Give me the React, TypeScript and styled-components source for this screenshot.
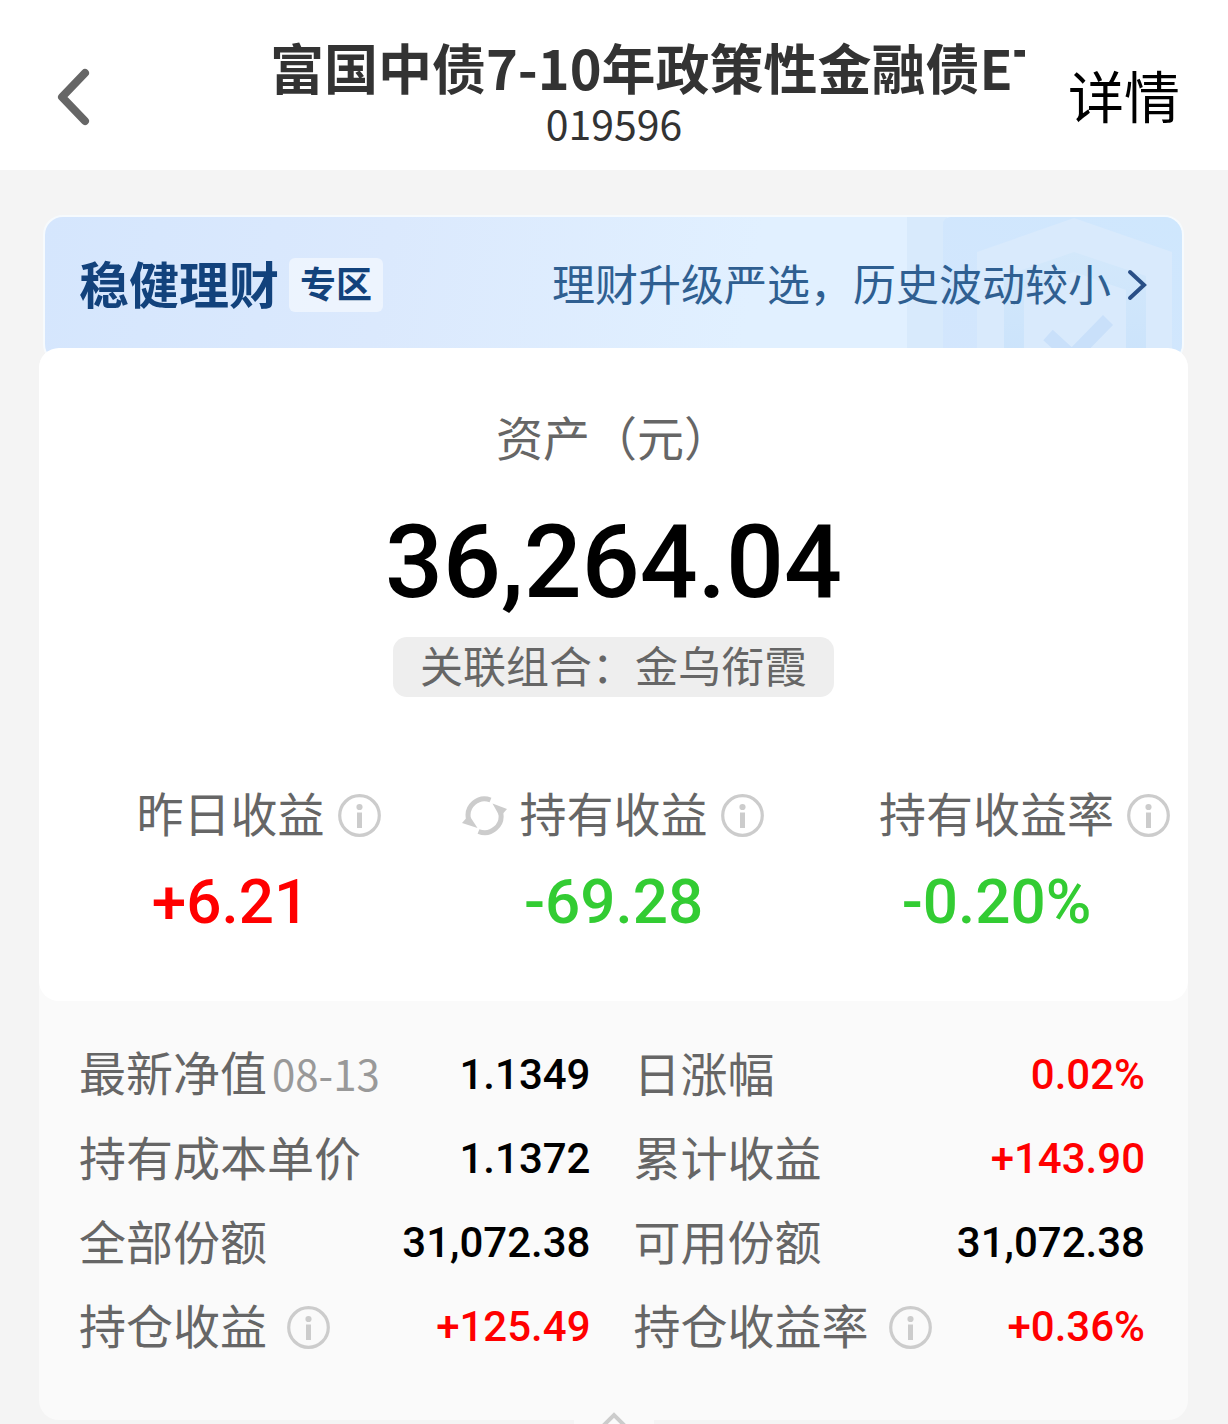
import React from "react";
import styled, { createGlobalStyle } from "styled-components";

const cjk = `"Noto Sans CJK SC", "Noto Sans", sans-serif`;
const numeric = `Roboto, "Noto Sans CJK SC", sans-serif`;

const colors = {
  page: "#f4f4f4",
  soft: "#fafafa",
  label: "#666666",
  faint: "#999999",
  title: "#333333",
  up: "#ff0000",
  down: "#33cc33",
  navy: "#12427c",
};

type Tone = "plain" | "up" | "down";
const toneColor: Record<Tone, string> = { plain: "#000000", up: colors.up, down: colors.down };

const GlobalStyle = createGlobalStyle`
  *, *::before, *::after { box-sizing: border-box; }
  body { margin: 0; background: ${colors.page}; font-family: ${cjk}; }
  h1, p, dl, dt, dd { margin: 0; }
  button { padding: 0; border: 0; background: none; font-family: inherit; cursor: pointer; }
  svg { display: block; }
`;

const Header = styled.header`
  display: grid;
  grid-template-columns: 203px minmax(0, 1fr) 203px;
  height: 170px;
  background: #ffffff;
`;

const BackButton = styled.button`
  display: flex;
  align-items: center;
  padding: 24px 0 0 56px;
`;

const Heading = styled.div`
  padding-top: 35px;
  text-align: center;
`;

const FundName = styled.h1`
  padding-left: 67px;
  overflow: hidden;
  color: ${colors.title};
  font-size: 54px;
  font-weight: 700;
  line-height: 64px;
  text-align: left;
  white-space: nowrap;
`;

const FundCode = styled.p`
  color: ${colors.title};
  font-size: 41px;
  line-height: 46px;
`;

const DetailButton = styled.button`
  justify-self: end;
  padding: 16px 48px 0 0;
  color: #000000;
  font-size: 56px;
`;

const Main = styled.main`
  padding: 45px 40px 0 39px;
`;

const Banner = styled.a`
  position: relative;
  display: flex;
  align-items: center;
  justify-content: space-between;
  height: 149px;
  margin: 0 4px;
  padding: 0 35px 10px 34px;
  overflow: hidden;
  border: 2px solid #f6fafd;
  border-radius: 20px;
  background: linear-gradient(100deg, #d5e6fd 0%, #dbe9fd 30%, #e1f0ff 62%, #e1f0ff 100%);
  text-decoration: none;
`;

const BannerArt = styled.svg`
  position: absolute;
  top: 0;
  right: 0;
`;

const BannerGroup = styled.span`
  position: relative;
  display: flex;
  align-items: center;
  gap: 10px;
`;

const BannerTitle = styled.strong`
  padding-bottom: 6px;
  color: ${colors.navy};
  font-size: 50px;
  font-weight: 700;
  line-height: 50px;
`;

const Zone = styled.span`
  padding: 0 11px 6px;
  border-radius: 6px;
  background: rgba(255, 255, 255, 0.5);
  color: ${colors.navy};
  font-size: 36px;
  font-weight: 700;
  line-height: 48px;
`;

const BannerText = styled.span`
  padding-bottom: 6px;
  color: #2f5f91;
  font-size: 43px;
  line-height: 50px;
`;

const Holdings = styled.section`
  border-radius: 20px;
  background: ${colors.soft};
`;

const Card = styled.div`
  position: relative;
  margin-top: -16px;
  padding: 63px 0;
  border-radius: 20px;
  background: #ffffff;
`;

const Summary = styled.div`
  display: flex;
  flex-direction: column;
  align-items: center;
`;

const Label = styled.span`
  padding-bottom: 6px;
  color: ${colors.label};
  font-size: 47px;
  line-height: 50px;
  white-space: nowrap;
`;

const Amount = styled.p`
  margin: 35px 0 15px;
  color: #000000;
  font-family: ${numeric};
  font-size: 102px;
  font-weight: 500;
  line-height: 120px;
`;

const Portfolio = styled.button`
  padding: 0 27px 6px;
  border-radius: 14px;
  background: #eeeeee;
  color: ${colors.label};
  font-size: 43px;
  line-height: 54px;
`;

const Stats = styled.dl`
  display: grid;
  grid-template-columns: repeat(3, minmax(0, 1fr));
  margin-top: 90px;
`;

const Stat = styled.div`
  display: grid;
  gap: 23px;
`;

const StatLabel = styled.dt`
  display: grid;
  grid-template-columns: 1fr auto 1fr;
  align-items: center;
  gap: 13px;
`;

const Side = styled.span<{ $end?: boolean }>`
  display: flex;
  justify-content: ${(p) => (p.$end ? "flex-end" : "flex-start")};
`;

const StatValue = styled.dd<{ $tone: Tone }>`
  color: ${(p) => toneColor[p.$tone]};
  font-family: ${numeric};
  font-size: 62px;
  font-weight: 500;
  line-height: 72px;
  text-align: center;
`;

const Details = styled.dl`
  display: grid;
  grid-template-columns: repeat(2, minmax(0, 1fr));
  column-gap: 43px;
  padding: 32px 43px 51px 40px;
`;

const Row = styled.div`
  display: flex;
  align-items: center;
  justify-content: space-between;
  height: 84px;
`;

const RowLabel = styled.dt`
  display: flex;
  align-items: center;
  gap: 20px;
`;

const NavDate = styled.small`
  margin-left: 5px;
  color: ${colors.faint};
  font-size: 42px;
`;

const RowValue = styled.dd<{ $tone: Tone }>`
  color: ${(p) => toneColor[p.$tone]};
  font-family: ${numeric};
  font-size: 42px;
  font-weight: 500;
  line-height: 56px;
`;

const InfoButton = styled.button`
  flex: none;
`;

const Handle = styled.button`
  position: relative;
  display: flex;
  justify-content: center;
  width: 80px;
  height: 14px;
  margin: -10px auto 0;
  overflow: hidden;
  background: ${colors.soft};
`;

const Info = ({ about }: { about: string }) => (
  <InfoButton type="button" aria-label={`${about}说明`}>
    <svg width="43" height="43" viewBox="0 0 43 43" fill="none">
      <circle cx="21.5" cy="21.5" r="19.8" stroke="#cccccc" strokeWidth="3.2" />
      <circle cx="21.5" cy="13" r="3.1" fill="#cccccc" />
      <path d="M21.5 18.5V34" stroke="#cccccc" strokeWidth="5" />
    </svg>
  </InfoButton>
);

const Refresh = () => (
  <InfoButton type="button" aria-label="刷新">
    <svg width="45" height="43" viewBox="0 0 45 43" fill="none">
      <path d="M28.5 6A16.500 16.500 0 0 0 6.500 25" stroke="#cccccc" strokeWidth="5" />
      <path d="M16.500 37.500A16.500 16.500 0 0 0 38.500 18" stroke="#cccccc" strokeWidth="5" />
      <path d="M0 29L7 21L15.500 34Z" fill="#cccccc" />
      <path d="M45 15L38 23L30.500 9.500Z" fill="#cccccc" />
    </svg>
  </InfoButton>
);

const stats: { label: string; value: string; tone: Tone; refresh?: boolean }[] = [
  { label: "昨日收益", value: "+6.21", tone: "up" },
  { label: "持有收益", value: "-69.28", tone: "down", refresh: true },
  { label: "持有收益率", value: "-0.20%", tone: "down" },
];

const details: { label: string; value: string; tone: Tone; date?: string; info?: boolean }[] = [
  { label: "最新净值", value: "1.1349", tone: "plain", date: "08-13" },
  { label: "日涨幅", value: "0.02%", tone: "up" },
  { label: "持有成本单价", value: "1.1372", tone: "plain" },
  { label: "累计收益", value: "+143.90", tone: "up" },
  { label: "全部份额", value: "31,072.38", tone: "plain" },
  { label: "可用份额", value: "31,072.38", tone: "plain" },
  { label: "持仓收益", value: "+125.49", tone: "up", info: true },
  { label: "持仓收益率", value: "+0.36%", tone: "up", info: true },
];

export default function App() {
  return (
    <>
      <GlobalStyle />
      <Header>
        <BackButton type="button" aria-label="返回">
          <svg width="34" height="58" viewBox="0 0 34 58" fill="none">
            <path d="M29 5L6 29L29 53" stroke="#666666" strokeWidth="8" strokeLinecap="round" strokeLinejoin="round" />
          </svg>
        </BackButton>
        <Heading>
          <FundName>富国中债7-10年政策性金融债ETF</FundName>
          <FundCode>019596</FundCode>
        </Heading>
        <DetailButton type="button">详情</DetailButton>
      </Header>
      <Main>
        <Banner href="#steady">
          <BannerArt width="275" height="145" viewBox="908 217 275 145" aria-hidden="true">
            <defs>
              <linearGradient id="panel" x1="0" y1="1" x2="1" y2="0">
                <stop offset="0" stopColor="#d3e6fd" />
                <stop offset="1" stopColor="#cfe7fd" />
              </linearGradient>
              <linearGradient id="band" x1="0" y1="0" x2="0" y2="1">
                <stop offset="0" stopColor="#d3e8fb" />
                <stop offset="1" stopColor="#cbe3fb" />
              </linearGradient>
            </defs>
            <rect x="908" y="217" width="40" height="145" fill="#d8eafc" />
            <path d="M944 362V225Q944 217 952 217H1183V362Z" fill="url(#panel)" />
            <path d="M978 362V252L1075 218L1173 252V362Z" fill="#d9eafc" />
            <path d="M1005 362V276L1075 252L1147 276V362H1127V290L1075 272L1025 290V362Z" fill="url(#band)" />
            <path d="M1049 335L1073 357L1109 320" stroke="#c9e0fa" strokeWidth="14" fill="none" />
          </BannerArt>
          <BannerGroup>
            <BannerTitle>稳健理财</BannerTitle>
            <Zone>专区</Zone>
          </BannerGroup>
          <BannerGroup>
            <BannerText>理财升级严选，历史波动较小</BannerText>
            <svg width="26" height="34" viewBox="0 0 26 34" fill="none">
              <path d="M9 4L23 17L9 30" stroke="#2a4f86" strokeWidth="4" strokeLinecap="round" />
            </svg>
          </BannerGroup>
        </Banner>
        <Holdings>
          <Card>
            <Summary>
              <Label>资产（元）</Label>
              <Amount>36,264.04</Amount>
              <Portfolio type="button">关联组合：金乌衔霞</Portfolio>
            </Summary>
            <Stats>
              {stats.map((s) => (
                <Stat key={s.label}>
                  <StatLabel>
                    <Side $end>{s.refresh && <Refresh />}</Side>
                    <Label>{s.label}</Label>
                    <Side>
                      <Info about={s.label} />
                    </Side>
                  </StatLabel>
                  <StatValue $tone={s.tone}>{s.value}</StatValue>
                </Stat>
              ))}
            </Stats>
          </Card>
          <Details>
            {details.map((d) => (
              <Row key={d.label}>
                <RowLabel>
                  <Label>
                    {d.label}
                    {d.date && <NavDate>{d.date}</NavDate>}
                  </Label>
                  {d.info && <Info about={d.label} />}
                </RowLabel>
                <RowValue $tone={d.tone}>{d.value}</RowValue>
              </Row>
            ))}
          </Details>
        </Holdings>
        <Handle type="button" aria-label="收起">
          <svg width="34" height="20" viewBox="0 0 34 20" fill="none">
            <path d="M4 18L17 5L30 18" stroke="#cccccc" strokeWidth="4" />
          </svg>
        </Handle>
      </Main>
    </>
  );
}
